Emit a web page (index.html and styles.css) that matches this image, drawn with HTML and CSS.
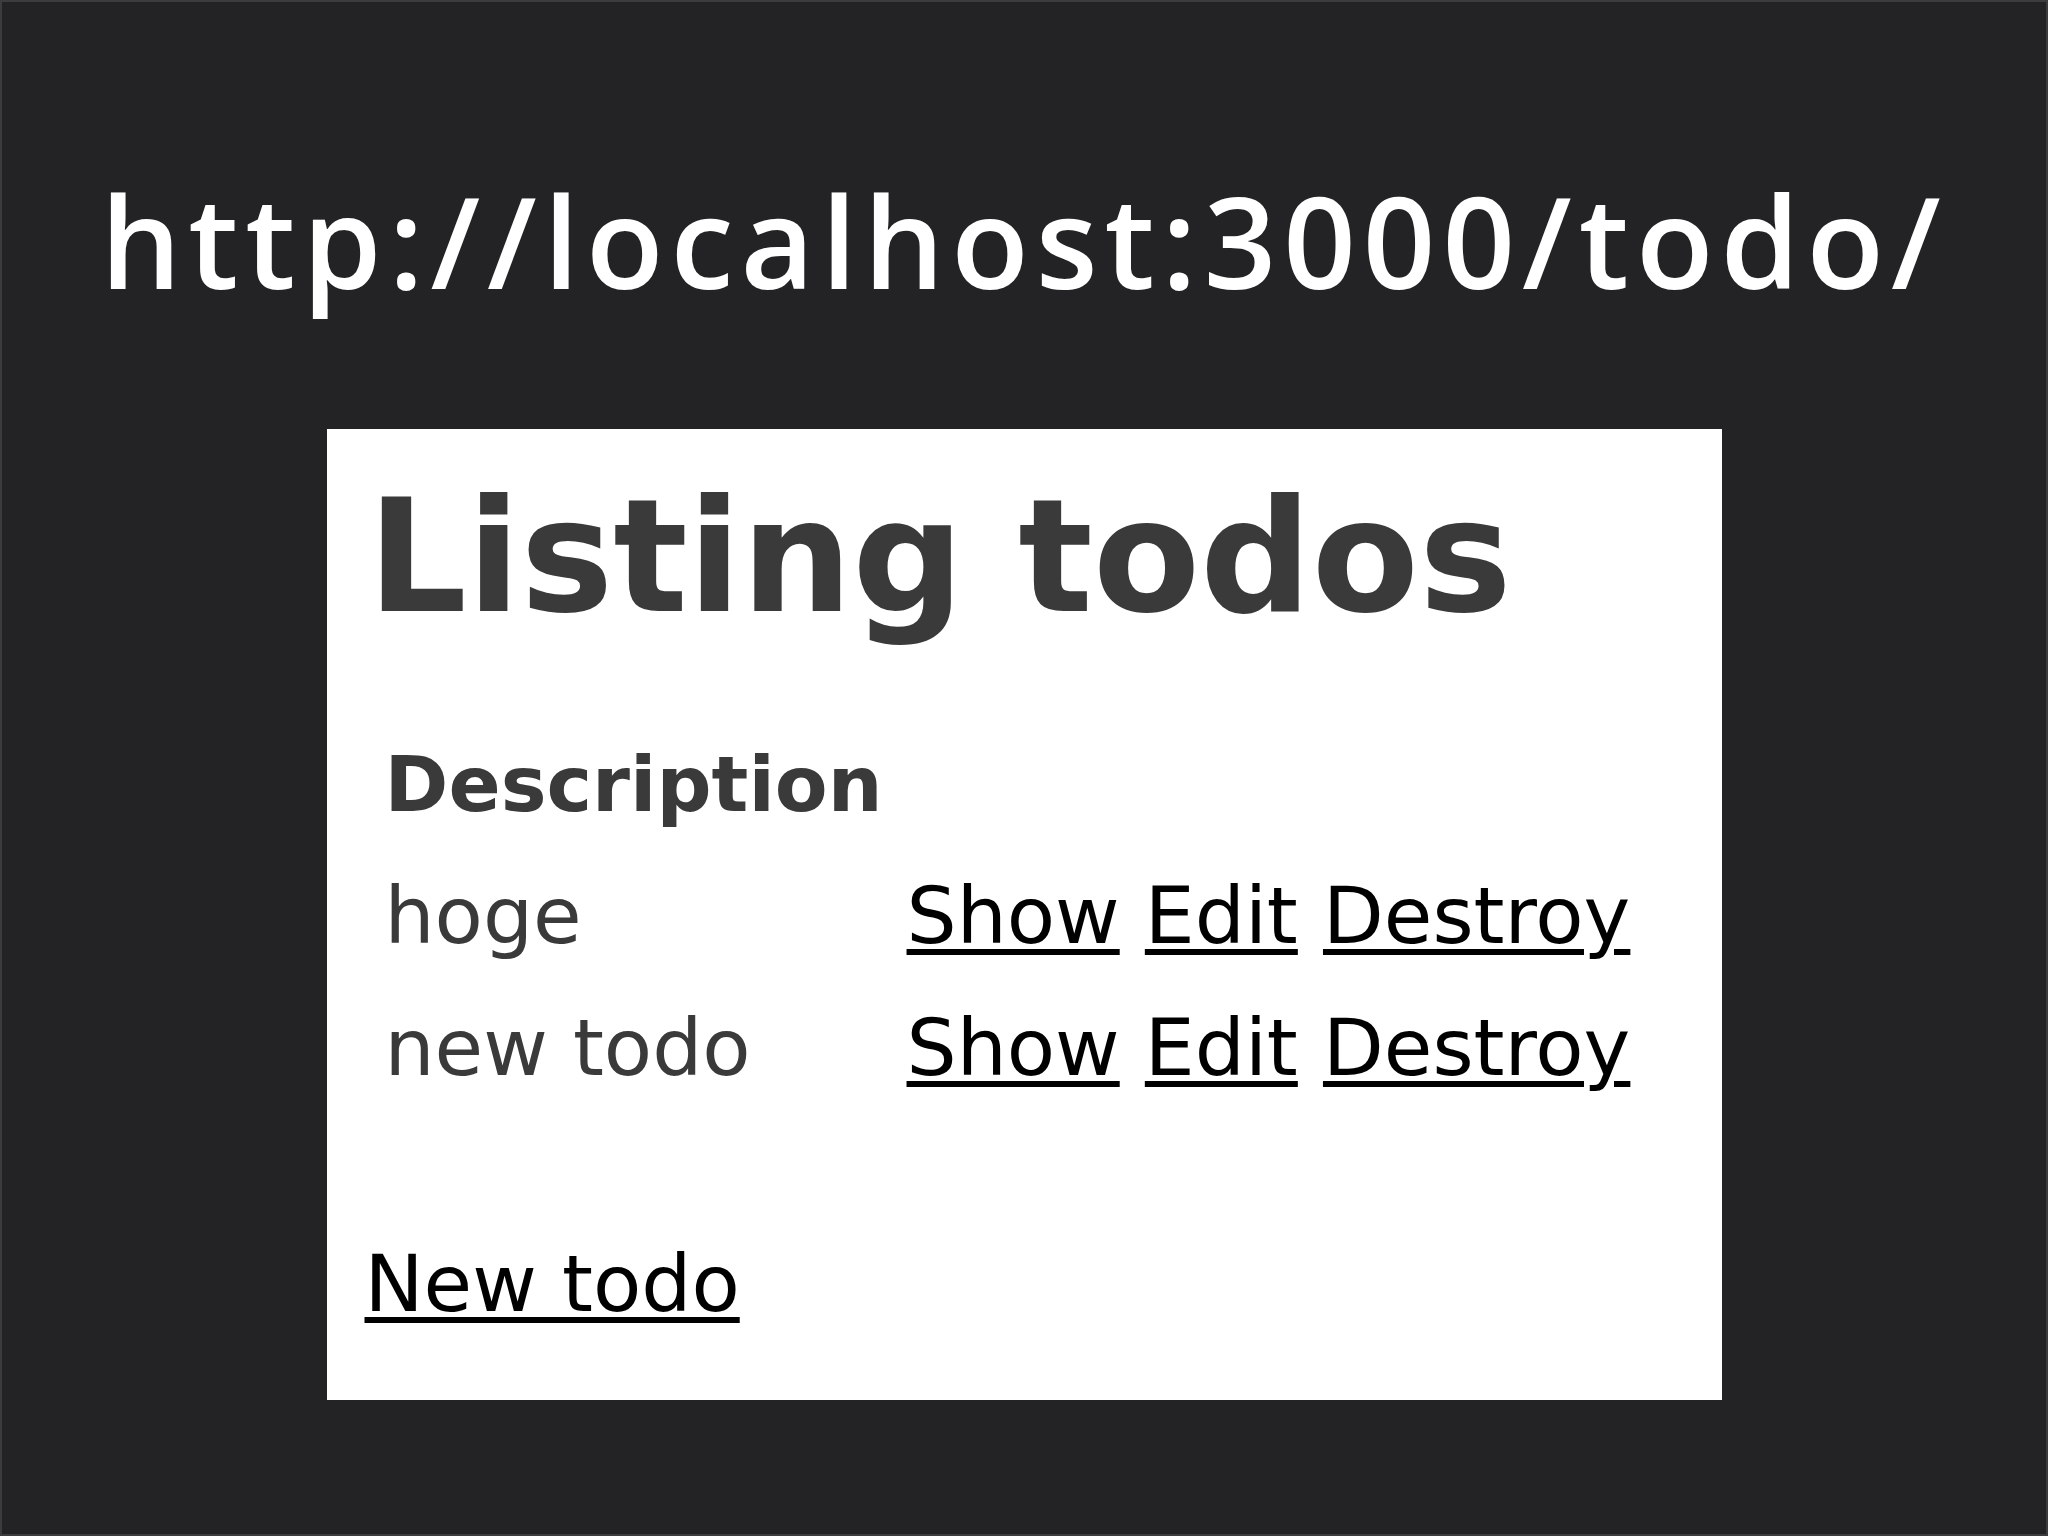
FILE: index.html
```html
<html>
  <head>
    <title>http://localhost:3000/todo/</title>
    <link rel="stylesheet" href="styles.css">
  </head>

  <body>
    <div class="slide">
      <h2 class="slide-title">http://localhost:3000/todo/</h2>

      <div class="screenshot">
        <h1>Listing todos</h1>

        <table>
          <tr>
            <th>Description</th>
            <th></th>
          </tr>
          <tr>
            <td>hoge</td>
            <td><a href="#">Show</a> <a href="#">Edit</a> <a href="#">Destroy</a></td>
          </tr>
          <tr>
            <td>new todo</td>
            <td><a href="#">Show</a> <a href="#">Edit</a> <a href="#">Destroy</a></td>
          </tr>
        </table>

        <p class="new-link"><a href="#">New todo</a></p>
      </div>
    </div>
  </body>
</html>
```

FILE: styles.css
```css
body {
  margin: 0px;
  background-color: #232225;
}

.slide {
  box-sizing: border-box;
  width: 2048px;
  height: 1536px;
  border: 2px solid #3c3c3e;
  display: flex;
  flex-direction: column;
  align-items: center;
}

.slide-title {
  margin: 0px;
  padding-top: 170px;
  font-family: "Open Sans", "Noto Sans", sans-serif;
  font-weight: 600;
  font-size: 127px;
  line-height: 136px;
  color: #ffffff;
  letter-spacing: 7px;
}

.screenshot {
  box-sizing: border-box;
  width: 1395px;
  margin-top: 121px;
  padding: 37px 34px 70px 38px;
  background-color: #ffffff;
  font-family: "DejaVu Sans", Verdana, sans-serif;
  font-size: 79px;
  color: #3a3a3a;
}

.screenshot h1 {
  margin: 0px 0px 71px 3px;
  font-size: 156px;
  font-weight: bold;
  line-height: normal;
}

.screenshot table {
  border-spacing: 0px;
  font-size: 79px;
  color: #3a3a3a;
}

.screenshot th {
  text-align: left;
  font-weight: bold;
  font-size: 77px;
  padding: 21px 4px 21px 20px;
}

.screenshot td {
  padding: 20px 0px 20px 20px;
}

.screenshot a {
  color: #000000;
  text-decoration: underline;
  text-decoration-thickness: 6px;
  text-underline-offset: 6px;
}

.new-link {
  margin: 124px 0px 0px 0px;
}
```
